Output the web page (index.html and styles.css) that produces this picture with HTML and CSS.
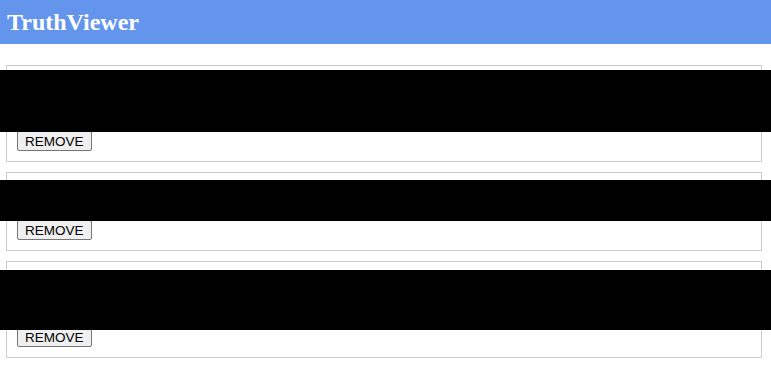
FILE: index.html
```html
<!DOCTYPE html>
<html>
<head>
<meta charset="utf-8">
<title>TruthViewer</title>
<link rel="stylesheet" href="styles.css">
</head>
<body>
<header class="topbar"><h1 class="brand">TruthViewer</h1></header>
<main class="list">
  <section class="card">
    <div class="card-body tall"></div>
    <button class="remove">REMOVE</button>
  </section>
  <section class="card">
    <div class="card-body short"></div>
    <button class="remove">REMOVE</button>
  </section>
  <section class="card">
    <div class="card-body tall"></div>
    <button class="remove">REMOVE</button>
  </section>
</main>
<div class="redact r1"></div>
<div class="redact r2"></div>
<div class="redact r3"></div>
</body>
</html>
```
FILE: styles.css
```css
html, body {
  margin: 0;
  padding: 0;
  background: #ffffff;
}
body {
  position: relative;
  font-family: "Liberation Serif", "Times New Roman", serif;
}
.topbar {
  height: 44px;
  background: #6495ed;
  display: flex;
  align-items: center;
  padding-left: 7px;
  box-sizing: border-box;
}
.brand {
  margin: 0;
  font-size: 24px;
  font-weight: bold;
  color: #ffffff;
  font-family: "Liberation Serif", "Times New Roman", serif;
}
.list {
  display: flex;
  flex-direction: column;
  gap: 10px;
  padding: 21px 9px 0 6px;
}
.card {
  border: 1px solid #cccccc;
  padding: 10px;
  display: flex;
  flex-direction: column;
  align-items: flex-start;
}
.card-body.tall { height: 55px; }
.card-body.short { height: 37px; }
.remove {
  font-family: "Liberation Sans", Arial, sans-serif;
  font-size: 13.5px;
  height: 20px;
  padding: 0 7px;
  border: 1px solid #767676;
  border-radius: 2px;
  background: #efefef;
  color: #000000;
  box-sizing: border-box;
}
.redact {
  position: absolute;
  left: 0;
  right: 0;
  background: #000000;
}
.r1 { top: 70px; height: 62px; }
.r2 { top: 180px; height: 41px; }
.r3 { top: 270px; height: 60px; }
```
